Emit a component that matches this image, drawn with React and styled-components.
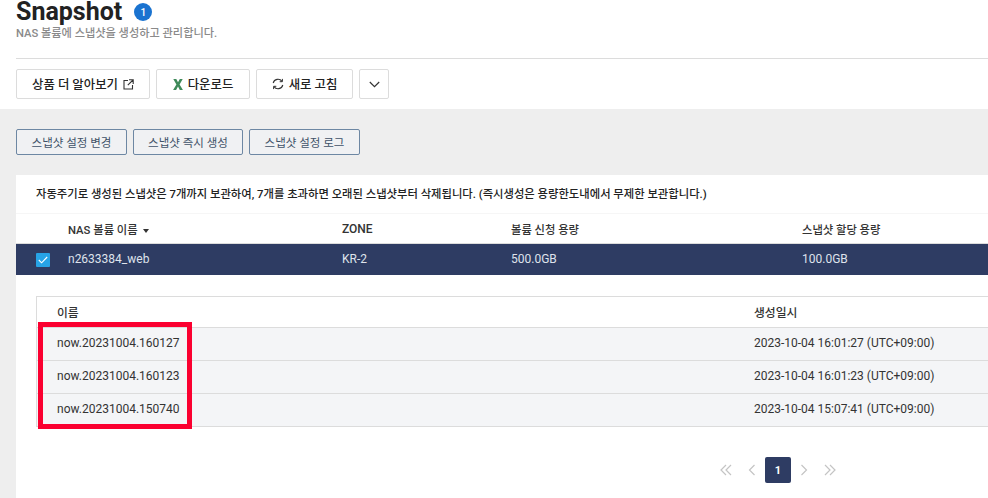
import styled, { createGlobalStyle } from 'styled-components';

const Global = createGlobalStyle`
  html, body {
    margin: 0;
    padding: 0;
    background: #fff;
    overflow: hidden;
  }
  body {
    font-family: Roboto, "Noto Sans CJK KR", sans-serif;
    color: #222;
  }
`;

const Page = styled.div`
  width: 988px;
  height: 498px;
  overflow: hidden;
  background: #fff;
`;
const Header = styled.header`
  height: 109px;
  padding-left: 16px;
  box-sizing: border-box;
`;
const TitleRow = styled.div`
  display: flex;
  align-items: center;
  gap: 12px;
  height: 24px;
`;
const Title = styled.h1`
  margin: 0;
  font-size: 25px;
  line-height: 24px;
  font-weight: 700;
  color: #222;
`;
const Badge = styled.span`
  width: 18px;
  height: 18px;
  border-radius: 50%;
  background: #1a73d0;
  color: #fff;
  font-size: 10px;
  font-weight: 500;
  display: flex;
  align-items: center;
  justify-content: center;
`;
const Sub = styled.p`
  margin: 2px 0 0;
  padding-top: 1px;
  font-size: 11.2px;
  line-height: 14px;
  font-weight: 500;
  color: #8a8a8a;
`;
const Divider = styled.div`
  height: 1px;
  background: #dcdcdc;
  margin-top: 17px;
`;
const Toolbar = styled.div`
  display: flex;
  gap: 6px;
  margin-top: 10px;
`;
const ToolButton = styled.button`
  width: ${p => p.$w}px;
  height: 30px;
  padding: 0;
  background: #fff;
  border: 1px solid #dcdcdc;
  border-radius: 2px;
  font: 500 12.4px Roboto, "Noto Sans CJK KR", sans-serif;
  color: #222;
  display: flex;
  align-items: center;
  justify-content: center;
  gap: 5px;
`;
const Body = styled.main`
  background: #eee;
  height: 389px;
  padding: 20px 0 0 16px;
  box-sizing: border-box;
`;
const Actions = styled.div`
  display: flex;
  gap: 6px;
`;
const ActionButton = styled.button`
  width: ${p => p.$w}px;
  height: 26px;
  padding: 0;
  background: #f0f1f3;
  border: 1px solid #6d87a3;
  border-radius: 2px;
  font: 400 11.5px Roboto, "Noto Sans CJK KR", sans-serif;
  color: #3f5168;
`;
const Panel = styled.section`
  margin-top: 20px;
  background: #fff;
  height: 323px;
  position: relative;
`;
const Note = styled.p`
  margin: 0;
  height: 38px;
  padding-left: 20px;
  font-size: 11.34px;
  font-weight: 500;
  line-height: 39px;
  color: #222;
  white-space: nowrap;
`;
const VolumeRow = styled.div`
  display: grid;
  grid-template-columns: 52px 274px 169px 291px 1fr;
  align-items: center;
  font-size: 12px;
  white-space: nowrap;
`;
const VolumeHead = styled(VolumeRow)`
  height: 29px;
  border-top: 1px solid #f6f6f6;
  border-bottom: 1px solid #dcdcdc;
  font-weight: 500;
  color: #333;
`;
const HeadLabel = styled.span`
  font-size: 11.3px;
`;
const VolumeSelected = styled(VolumeRow)`
  height: 31px;
  padding-bottom: 2px;
  box-sizing: border-box;
  background: #2e3c63;
  color: #dfe3ec;
`;
const Check = styled.span`
  width: 14px;
  height: 14px;
  margin: 2px 0 0 20px;
  border-radius: 1px;
  background: #27a3e6;
  display: flex;
  align-items: center;
  justify-content: center;
`;
const Caret = styled.span`
  display: inline-block;
  margin-left: 3px;
  border-left: 3.5px solid transparent;
  border-right: 3.5px solid transparent;
  border-top: 4px solid #333;
  vertical-align: 1px;
`;
const Inner = styled.div`
  margin: 21px 0 0 20px;
  border-top: 1px solid #dcdcdc;
  border-left: 1px solid #dcdcdc;
`;
const InnerRow = styled.div`
  display: grid;
  grid-template-columns: 697px 1fr;
  padding: 0 0 2px 20px;
  align-items: center;
  box-sizing: content-box;
  height: ${p => (p.$head ? 28 : 30)}px;
  border-bottom: 1px solid #dcdcdc;
  background: ${p => (p.$head ? '#fff' : '#f4f5f7')};
  font-size: ${p => (p.$head ? 11.8 : 12)}px;
  font-weight: ${p => (p.$head ? 500 : 400)};
  color: #333;
`;
const Marker = styled.div`
  position: absolute;
  left: 22px;
  top: 147px;
  width: 154px;
  height: 107px;
  box-sizing: border-box;
  border: 5px solid #fb0030;
`;
const Pager = styled.nav`
  display: flex;
  align-items: center;
  margin: 30px 0 0 697px;
  height: 26px;
`;
const PageLink = styled.span`
  width: 26px;
  height: 26px;
  display: flex;
  align-items: center;
  justify-content: center;
`;
const PageCurrent = styled.span`
  width: 26px;
  height: 26px;
  border-radius: 2px;
  background: #2e3c63;
  color: #fff;
  font-size: 11px;
  font-weight: 700;
  display: flex;
  align-items: center;
  justify-content: center;
`;

const ExternalIcon = () => (
  <svg width="11" height="11" viewBox="0 0 11 11" fill="none" stroke="#333" strokeWidth="1.1">
    <path d="M5 1.5H1v8.5h8.5V6M6 .8h4.2V5M10 1 4.8 6.2" />
  </svg>
);
const ExcelIcon = () => (
  <svg width="10" height="11" viewBox="0 0 10 11" fill="#3f8a5a">
    <path d="M.3 0h3l1.7 3.3L6.8 0h2.9L6.6 5.4 9.9 11H6.8L5 7.5 3.1 11H.1l3.3-5.6z" />
  </svg>
);
const RefreshIcon = () => (
  <svg width="12" height="12" viewBox="0 0 12 12" fill="none" stroke="#333" strokeWidth="1.1">
    <path d="M1.2 5A4.9 4.9 0 0 1 10 3.4M10.8 7A4.9 4.9 0 0 1 2 8.6" />
    <path d="M10.4 .9v2.8H7.7M1.6 11.1V8.3h2.7" strokeWidth="1" />
  </svg>
);
const ChevronDown = () => (
  <svg width="11" height="7" viewBox="0 0 11 7" fill="none" stroke="#333" strokeWidth="1.2">
    <path d="M.8 1 5.5 5.6 10.2 1" />
  </svg>
);
const CheckMark = () => (
  <svg width="10" height="8" viewBox="0 0 10 8" fill="none" stroke="#fff" strokeWidth="1.1">
    <path d="M.8 4 3.6 6.8 9.2 1" />
  </svg>
);
const Arrow = ({ double, right }) => (
  <svg width="12" height="12" viewBox="0 0 12 12" fill="none" stroke="#c4c4c4" strokeWidth="1.2">
    <g transform={right ? 'matrix(-1 0 0 1 12 0)' : undefined}>
      {double ? <path d="M6 1 1 6l5 5M11 1 6 6l5 5" /> : <path d="M8.5 1 3.5 6l5 5" />}
    </g>
  </svg>
);

const snapshots = [
  ['now.20231004.160127', '2023-10-04 16:01:27 (UTC+09:00)'],
  ['now.20231004.160123', '2023-10-04 16:01:23 (UTC+09:00)'],
  ['now.20231004.150740', '2023-10-04 15:07:41 (UTC+09:00)'],
];

export default function App() {
  return (
    <Page>
      <Global />
      <Header>
        <TitleRow>
          <Title>Snapshot</Title>
          <Badge>1</Badge>
        </TitleRow>
        <Sub>NAS 볼륨에 스냅샷을 생성하고 관리합니다.</Sub>
        <Divider />
        <Toolbar>
          <ToolButton $w={134}>상품 더 알아보기 <ExternalIcon /></ToolButton>
          <ToolButton $w={94}><ExcelIcon /> 다운로드</ToolButton>
          <ToolButton $w={97}><RefreshIcon /> 새로 고침</ToolButton>
          <ToolButton $w={30}><ChevronDown /></ToolButton>
        </Toolbar>
      </Header>
      <Body>
        <Actions>
          <ActionButton $w={111}>스냅샷 설정 변경</ActionButton>
          <ActionButton $w={110}>스냅샷 즉시 생성</ActionButton>
          <ActionButton $w={111}>스냅샷 설정 로그</ActionButton>
        </Actions>
        <Panel>
          <Note>자동주기로 생성된 스냅샷은 7개까지 보관하여, 7개를 초과하면 오래된 스냅샷부터 삭제됩니다. (즉시생성은 용량한도내에서 무제한 보관합니다.)</Note>
          <VolumeHead>
            <span />
            <HeadLabel>NAS 볼륨 이름 <Caret /></HeadLabel>
            <span>ZONE</span>
            <HeadLabel>볼륨 신청 용량</HeadLabel>
            <HeadLabel>스냅샷 할당 용량</HeadLabel>
          </VolumeHead>
          <VolumeSelected>
            <Check><CheckMark /></Check>
            <span>n2633384_web</span>
            <span>KR-2</span>
            <span>500.0GB</span>
            <span>100.0GB</span>
          </VolumeSelected>
          <Inner>
            <InnerRow $head>
              <span>이름</span>
              <span>생성일시</span>
            </InnerRow>
            {snapshots.map(([name, date]) => (
              <InnerRow key={name}>
                <span>{name}</span>
                <span>{date}</span>
              </InnerRow>
            ))}
          </Inner>
          <Marker />
          <Pager>
            <PageLink><Arrow double /></PageLink>
            <PageLink><Arrow /></PageLink>
            <PageCurrent>1</PageCurrent>
            <PageLink><Arrow right /></PageLink>
            <PageLink><Arrow double right /></PageLink>
          </Pager>
        </Panel>
      </Body>
    </Page>
  );
}
